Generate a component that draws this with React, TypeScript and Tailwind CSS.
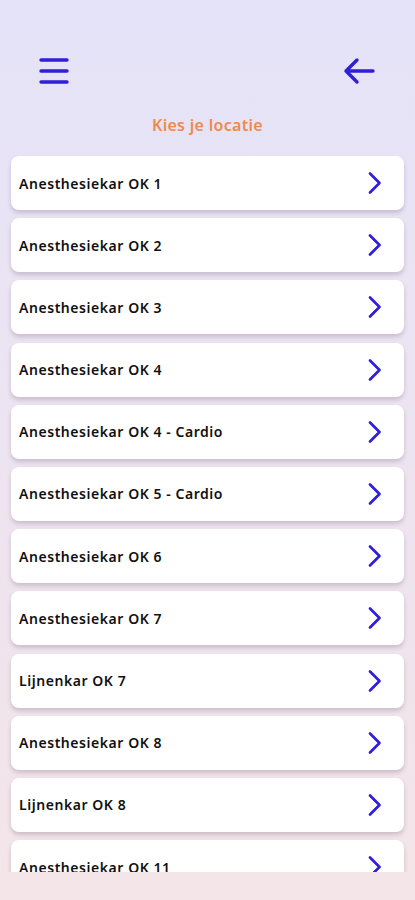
// Location picker screen

const locations = [
  'Anesthesiekar OK 1',
  'Anesthesiekar OK 2',
  'Anesthesiekar OK 3',
  'Anesthesiekar OK 4',
  'Anesthesiekar OK 4 - Cardio',
  'Anesthesiekar OK 5 - Cardio',
  'Anesthesiekar OK 6',
  'Anesthesiekar OK 7',
  'Lijnenkar OK 7',
  'Anesthesiekar OK 8',
  'Lijnenkar OK 8',
  'Anesthesiekar OK 11',
];

function MenuIcon() {
  return (
    <svg width="30" height="26" viewBox="0 0 30 26" fill="none" stroke="#2f1fd8" strokeWidth="3.4" strokeLinecap="round">
      <path d="M2 2h26M2 13h26M2 24h26" />
    </svg>
  );
}

function BackIcon() {
  return (
    <svg width="32" height="28" viewBox="0 0 32 28" fill="none" stroke="#2f1fd8" strokeWidth="3.4" strokeLinecap="round" strokeLinejoin="round">
      <path d="M30 14H3M14 3 3 14l11 11" />
    </svg>
  );
}

function Chevron() {
  return (
    <svg width="16" height="24" viewBox="0 0 16 24" fill="none" stroke="#2f1fd8" strokeWidth="2.7" strokeLinecap="round" strokeLinejoin="round">
      <path d="M3 2.5 12.5 12 3 21.5" />
    </svg>
  );
}

export default function App() {
  return (
    <div
      className="h-[900px] w-full flex flex-col bg-gradient-to-b from-[#e5e3f9] to-[#f4e5e8] overflow-hidden"
      style={{ fontFamily: '"Noto Sans", "Open Sans", sans-serif' }}
    >
      {/* Header */}
      <div className="flex items-center justify-between pt-[57px] pl-[39px] pr-[40px]">
        <MenuIcon />
        <BackIcon />
      </div>

      <h1 className="mt-[28px] text-center text-[16px] font-semibold tracking-[0.3px] text-[#ef8a4c]">Kies je locatie</h1>

      {/* List */}
      <div className="mt-[16px] h-[719px] overflow-hidden px-[11px]">
        <div className="flex flex-col gap-[8.2px] pt-[3px]">
          {locations.map((name) => (
            <div
              key={name}
              className="h-[54px] shrink-0 flex items-center justify-between rounded-[8px] bg-white pl-[8px] pr-[21px] shadow-[0_3px_4px_rgba(80,60,80,0.22)]"
            >
              <span className="text-[14px] font-semibold text-[#111111] tracking-[0.55px]">{name}</span>
              <Chevron />
            </div>
          ))}
        </div>
      </div>
    </div>
  );
}
